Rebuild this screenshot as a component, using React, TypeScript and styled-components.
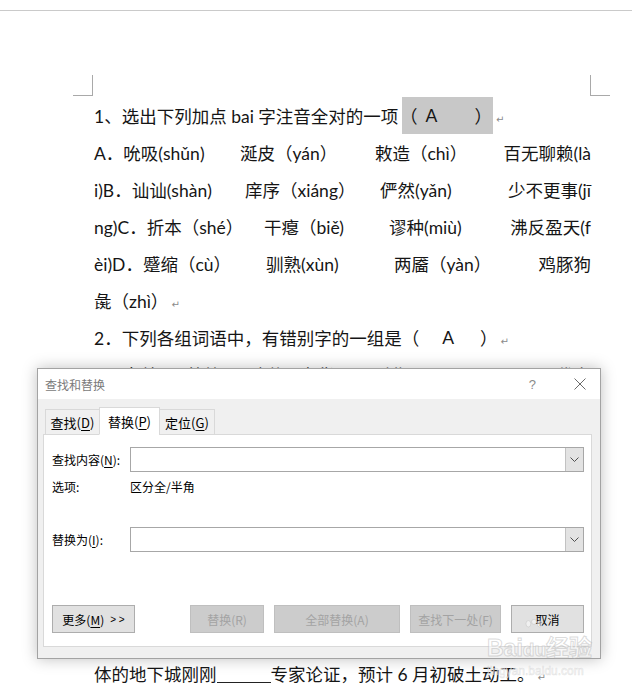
import styled, { createGlobalStyle } from "styled-components";

const GlobalStyle = createGlobalStyle`
  html, body {
    margin: 0;
    padding: 0;
    background: #fff;
  }
`;

const lines: string[][] = [
  ["A．吮吸(shǔn)", "涎皮（yán）", "敕造（chì）", "百无聊赖(là"],
  ["i)B．讪讪(shàn)", "庠序（xiáng）", "俨然(yǎn)", "少不更事(jī"],
  ["ng)C．折本（shé）", "干瘪（biě)", "谬种(miù)", "沸反盈天(f"],
  ["èi)D．蹙缩（cù）", "驯熟(xùn)", "两靥（yàn）", "鸡豚狗"],
];

const lineCols = [
  "146px 135px 126px 1fr",
  "151px 135px 119px 1fr",
  "170px 125px 119px 1fr",
  "172px 128px 143px 1fr",
];

const App = () => {
  return (
    <Screen>
      <GlobalStyle />
      <TopRule />
      <CornerRow>
        <Corner $side="left" />
        <Corner $side="right" />
      </CornerRow>

      <Doc>
        <JLine $cols="308px 91px auto">
          <span>1、选出下列加点 bai 字注音全对的一项</span>
          <Highlight>
            <OpenParen>（</OpenParen>
            <Answer $l={8}>A</Answer>
            <CloseParen>）</CloseParen>
          </Highlight>
          <Mark>↵</Mark>
        </JLine>
        {lines.map((segs, i) => (
          <JLine key={i} $cols={lineCols[i]} $justify>
            {segs.map((s) => (
              <span key={s}>{s}</span>
            ))}
          </JLine>
        ))}
        <Line>
          彘（zhì）<Mark>↵</Mark>
        </Line>
        <Line>
          2．下列各组词语中，有错别字的一组是（<Answer $l={23} $r={26}>A</Answer>）<Mark>↵</Mark>
        </Line>
        <JLine $cols="93px 62px 50px 73px 180px 1fr" $justify>
          <span>B．宓羲</span>
          <span>竹篱</span>
          <span>暗藏</span>
          <span>奇货可居</span>
          <span>副业</span>
          <span>代之</span>
        </JLine>
        <Hidden />
        <Line>
          体的地下城刚刚<Blank />专家论证，预计 6 月初破土动工。<Mark>↵</Mark>
        </Line>
      </Doc>

      <Dialog>
        <TitleBar>
          <Title>查找和替换</Title>
          <Help>?</Help>
          <CloseIcon viewBox="0 0 12 12">
            <path d="M0.5 0.5 L11.5 11.5 M11.5 0.5 L0.5 11.5" stroke="#6a6a6a" strokeWidth="1" />
          </CloseIcon>
        </TitleBar>
        <Body>
          <TabRow>
            <Tab $w={55}>
              查找(<u>D</u>)
            </Tab>
            <Tab $w={61} $active>
              替换(<u>P</u>)
            </Tab>
            <Tab $w={56}>
              定位(<u>G</u>)
            </Tab>
          </TabRow>
          <Panel>
            <FieldRow $top={12}>
              <FieldLabel>
                查找内容(<u>N</u>):
              </FieldLabel>
              <Combo>
                <DropButton>
                  <svg width="9" height="5" viewBox="0 0 9 5">
                    <path d="M0.5 0.5 L4.5 4.5 L8.5 0.5" fill="none" stroke="#505050" strokeWidth="1" />
                  </svg>
                </DropButton>
              </Combo>
            </FieldRow>
            <OptionRow>
              <FieldLabel>选项:</FieldLabel>
              <span>区分全/半角</span>
            </OptionRow>
            <FieldRow $top={33}>
              <FieldLabel>
                替换为(<u>I</u>):
              </FieldLabel>
              <Combo>
                <DropButton>
                  <svg width="9" height="5" viewBox="0 0 9 5">
                    <path d="M0.5 0.5 L4.5 4.5 L8.5 0.5" fill="none" stroke="#505050" strokeWidth="1" />
                  </svg>
                </DropButton>
              </Combo>
            </FieldRow>
            <ButtonRow>
              <Button $w={83}>
                更多(<u>M</u>) <Arrows>&gt; &gt;</Arrows>
              </Button>
              <Spacer />
              <Button $w={74} $disabled>
                替换(R)
              </Button>
              <Button $w={126} $disabled>
                全部替换(A)
              </Button>
              <Button $w={91} $disabled>
                查找下一处(F)
              </Button>
              <Button $w={73}>取消</Button>
            </ButtonRow>
          </Panel>
        </Body>
      </Dialog>

      <Watermark>
        <Paw viewBox="0 0 24 20">
          <ellipse cx="5" cy="6" rx="3" ry="4" />
          <ellipse cx="12" cy="3.5" rx="3" ry="3.2" />
          <ellipse cx="19" cy="6" rx="3" ry="4" />
        </Paw>
        <Brand>
          Bai<Du>du</Du>经验
        </Brand>
        <Site>jingyan.baidu.com</Site>
      </Watermark>
    </Screen>
  );
};

export default App;

const Screen = styled.div`
  position: relative;
  width: 632px;
  height: 690px;
  overflow: hidden;
  background: #fff;
`;

const TopRule = styled.div`
  height: 10px;
  border-bottom: 1px solid #cacaca;
`;

const CornerRow = styled.div`
  display: flex;
  justify-content: space-between;
  margin-top: 64px;
  margin-bottom: 1px;
  padding: 0 22px 0 73px;
`;

const Corner = styled.div<{ $side: "left" | "right" }>`
  box-sizing: border-box;
  width: 20px;
  height: 21px;
  border-bottom: 1px solid #a9a9a9;
  ${(p) => (p.$side === "left" ? "border-right" : "border-left")}: 1px solid #a9a9a9;
`;

const Doc = styled.div`
  width: 497px;
  padding-left: 94px;
  font-family: Lato, "Noto Sans CJK SC", sans-serif;
  font-size: 17.5px;
  color: #151515;
`;

const Line = styled.div`
  height: 37px;
  display: flex;
  align-items: center;
  white-space: nowrap;
`;

const JLine = styled.div<{ $cols: string; $justify?: boolean }>`
  height: 37px;
  display: grid;
  grid-template-columns: ${(p) => p.$cols};
  align-items: center;
  white-space: nowrap;

  & > span:last-child {
    justify-self: ${(p) => (p.$justify ? "end" : "start")};
  }
`;

const Highlight = styled.span`
  display: flex;
  align-items: center;
  height: 37px;
  background: #c8c8c8;
`;

const OpenParen = styled.span`
  margin-left: -2px;
`;

const Answer = styled.span<{ $l?: number; $r?: number }>`
  margin-left: ${(p) => p.$l ?? 0}px;
  margin-right: ${(p) => p.$r ?? 0}px;
`;

const CloseParen = styled.span`
  margin-left: auto;
  margin-right: 1px;
`;

const Mark = styled.span`
  font-family: "DejaVu Sans", sans-serif;
  font-size: 10px;
  color: #8a8a8a;
  margin-left: 3px;
  position: relative;
  top: 4px;
`;

const Hidden = styled.div`
  height: 262px;
`;

const Blank = styled.span`
  display: inline-block;
  width: 54px;
  height: 16px;
  border-bottom: 1px solid #222;
  position: relative;
  top: 1px;
`;

const Dialog = styled.section`
  position: absolute;
  left: 37px;
  top: 368px;
  width: 564px;
  height: 291px;
  box-sizing: border-box;
  display: flex;
  flex-direction: column;
  border: 1px solid #a3a3a3;
  background: #f0f0f0;
  box-shadow: 0 0 14px rgba(0, 0, 0, 0.25);
  font-family: "Noto Sans CJK SC", sans-serif;
  font-size: 12px;
  color: #000;

  u {
    text-underline-offset: 2px;
  }
`;

const TitleBar = styled.div`
  height: 30px;
  display: flex;
  align-items: center;
  padding-left: 7px;
  background: #fff;
`;

const Title = styled.span`
  color: #7a7a7a;
`;

const Help = styled.span`
  margin-left: auto;
  margin-right: 38px;
  color: #8a8a8a;
  font-family: "Liberation Sans", sans-serif;
  font-size: 13px;
`;

const CloseIcon = styled.svg`
  width: 12px;
  height: 12px;
  margin-right: 14px;
`;

const Body = styled.div`
  flex: 1;
  display: flex;
  flex-direction: column;
  padding: 9px 8px 11px 5px;
`;

const TabRow = styled.div`
  display: flex;
  align-items: flex-end;
  height: 27px;
  padding-left: 2px;
  margin-bottom: -1px;
  position: relative;
  z-index: 1;
`;

const Tab = styled.div<{ $w: number; $active?: boolean }>`
  box-sizing: border-box;
  width: ${(p) => p.$w}px;
  height: ${(p) => (p.$active ? 28 : 26)}px;
  margin-left: -1px;
  display: flex;
  align-items: center;
  justify-content: center;
  font-size: 13px;
  border: 1px solid #d9d9d9;
  border-bottom: ${(p) => (p.$active ? "1px solid #fff" : "1px solid #d9d9d9")};
  background: ${(p) => (p.$active ? "#fff" : "#f0f0f0")};
  &:first-child {
    margin-left: 0;
  }
`;

const Panel = styled.div`
  flex: 1;
  display: flex;
  flex-direction: column;
  padding: 0 7px 12px 8px;
  background: #fff;
  border: 1px solid #d9d9d9;
`;

const FieldRow = styled.div<{ $top: number }>`
  display: flex;
  align-items: center;
  margin-top: ${(p) => p.$top}px;
`;

const OptionRow = styled.div`
  display: flex;
  align-items: center;
  height: 16px;
  margin-top: 6px;
`;

const FieldLabel = styled.span`
  width: 78px;
  flex: none;
`;

const Combo = styled.div`
  flex: 1;
  box-sizing: border-box;
  height: 25px;
  display: flex;
  justify-content: flex-end;
  border: 1px solid #a7a7a7;
  background: #fff;
`;

const DropButton = styled.div`
  width: 17px;
  display: flex;
  align-items: center;
  justify-content: center;
  background: #e3e3e3;
  border-left: 1px solid #c2c2c2;
`;

const ButtonRow = styled.div`
  display: flex;
  gap: 10px;
  margin-top: 53px;
`;

const Spacer = styled.div`
  flex: 1;
`;

const Button = styled.div<{ $w: number; $disabled?: boolean }>`
  box-sizing: border-box;
  width: ${(p) => p.$w}px;
  height: 28px;
  display: flex;
  align-items: center;
  justify-content: center;
  border: 1px solid ${(p) => (p.$disabled ? "#bfbfbf" : "#adadad")};
  background: ${(p) => (p.$disabled ? "#cccccc" : "#e1e1e1")};
  color: ${(p) => (p.$disabled ? "#a3a3a3" : "#000")};
`;

const Arrows = styled.span`
  margin-left: 6px;
  font-family: "Liberation Sans", sans-serif;
  font-size: 10px;
`;

const Watermark = styled.div`
  position: absolute;
  left: 487px;
  top: 619px;
  display: flex;
  flex-direction: column;
  align-items: flex-start;
  pointer-events: none;
  color: rgba(255, 255, 255, 0.6);
  -webkit-text-stroke: 1px rgba(175, 175, 175, 0.45);
`;

const Paw = styled.svg`
  width: 22px;
  height: 16px;
  margin-left: 36px;
  fill: rgba(255, 255, 255, 0.5);
  stroke: rgba(180, 180, 180, 0.45);
`;

const Brand = styled.div`
  font-family: "Liberation Sans", "Noto Sans CJK SC", sans-serif;
  font-size: 23px;
  font-weight: 700;
  line-height: 26px;
  white-space: nowrap;
`;

const Du = styled.span`
  font-size: 19px;
`;

const Site = styled.div`
  font-family: "Liberation Sans", sans-serif;
  font-size: 12px;
  line-height: 16px;
  white-space: nowrap;
  -webkit-text-stroke: 0.6px rgba(185, 185, 185, 0.4);
`;
